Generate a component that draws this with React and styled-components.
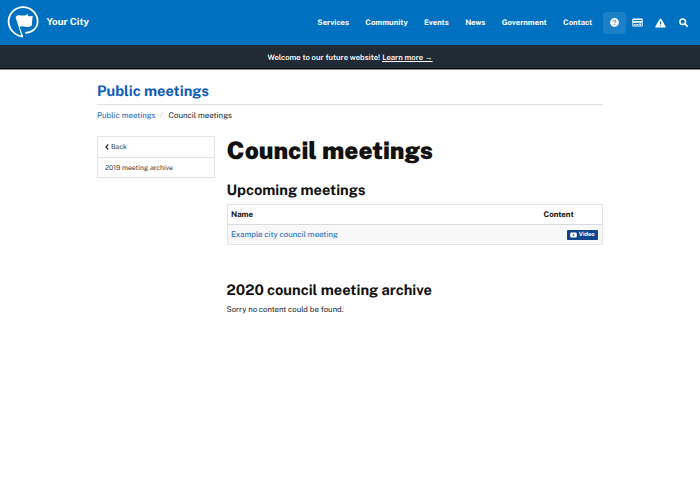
import React from 'react';
import styled, { createGlobalStyle } from 'styled-components';

const Global = createGlobalStyle`
  *, *::before, *::after { box-sizing: border-box; }
  html { background: #fff; }
  body { margin: 0; font-family: "Public Sans", Inter, "Liberation Sans", sans-serif; color: #212529; font-size: 7.75px; line-height: 12px; text-rendering: geometricPrecision; }
  h1, h2, p { margin: 0; }
  a { color: #1467bd; text-decoration: none; }
`;

const Header = styled.header`
  height: 45px;
  padding: 0 5px 0 6px;
  display: flex;
  align-items: center;
  background: #0070c0;
  color: #fff;
`;
const Brand = styled.a`
  display: flex;
  align-items: center;
  gap: 6.5px;
  margin-right: auto;
  color: #fff;
  font-size: 9.8px;
  font-weight: 700;
`;
const BrandName = styled.span`
  padding-top: 1px;
`;
const Logo = styled.svg`
  width: 34px;
  height: 34px;
  display: block;
  margin-top: -1px;
`;
const Nav = styled.nav`
  display: flex;
  align-items: center;
  gap: 16.3px;
  margin-right: 10.7px;
`;
const NavLink = styled.a`
  color: #fff;
  font-size: 7.7px;
  font-weight: 700;
`;
const Tools = styled.div`
  display: flex;
`;
const Tool = styled.a`
  width: 23px;
  height: 22px;
  border-radius: 4px;
  display: flex;
  align-items: center;
  justify-content: center;
  background: ${(p) => (p.$active ? '#1b80c7' : 'transparent')};
  svg { display: block; fill: #fff; }
`;

const Banner = styled.div`
  height: 24px;
  margin-bottom: 1px;
  padding-top: 2px;
  border-bottom: 1px solid #07090b;
  box-shadow: 0 1px 0 #8a8d90;
  display: flex;
  align-items: center;
  justify-content: center;
  gap: 2px;
  background: #212b35;
  color: #fff;
  font-size: 7.7px;
  font-weight: 600;
`;
const BannerLink = styled.a`
  color: #fff;
  text-decoration: underline;
  text-underline-offset: 1px;
`;
const Arrow = styled.span`
  font-family: "Liberation Sans", sans-serif;
`;

const Page = styled.main`
  width: 506px;
  margin: 0 auto;
`;
const SectionTitle = styled.h2`
  height: 35px;
  padding-top: 13px;
  border-bottom: 1px solid #dee2e6;
  color: #0f5cb8;
  font-size: 14.6px;
  line-height: 18px;
  font-weight: 700;
`;
const Breadcrumb = styled.nav`
  display: flex;
  margin-top: 5px;
  font-size: 7.87px;
`;
const Slash = styled.span`
  width: 13px;
  padding-left: 4.5px;
  color: #b3bac1;
`;
const Columns = styled.div`
  display: grid;
  grid-template-columns: 118px 376.5px;
  column-gap: 11.5px;
  margin-top: 14px;
`;
const SideMenu = styled.nav`
  align-self: start;
  border: 1px solid #e3e3e3;
`;
const SideLink = styled.a`
  display: flex;
  align-items: center;
  height: 20px;
  padding-left: 7px;
  color: #343a40;
  font-size: 6.87px;
  & + & { border-top: 1px solid #e3e3e3; }
  svg { width: 4px; height: 6px; margin-right: 2px; }
`;
const PageTitle = styled.h1`
  color: #111;
  font-size: 24.2px;
  line-height: 30px;
  font-weight: 900;
`;
const Heading = styled.h2`
  margin-top: ${(p) => p.$top}px;
  color: #111;
  font-size: 14.6px;
  line-height: 18px;
  font-weight: 700;
`;
const Table = styled.div`
  margin-top: 4px;
  border: 1px solid #e3e5e7;
`;
const Row = styled.div`
  display: grid;
  grid-template-columns: 1fr 62px;
  align-items: center;
  height: ${(p) => (p.$head ? 19 : 20)}px;
  padding: 0 4px 0 3.5px;
  font-size: 7.86px;
  background: ${(p) => (p.$head ? '#fff' : '#f8f8f8')};
  color: #111;
  font-weight: ${(p) => (p.$head ? 700 : 400)};
  & + & { padding-top: 1px; border-top: 1px solid #d9dcdf; }
`;
const Cell = styled.span`
  padding-left: ${(p) => p.$indent || 0}px;
`;
const VideoButton = styled.a`
  justify-self: end;
  display: flex;
  align-items: center;
  justify-content: center;
  gap: 1.5px;
  width: 31px;
  height: 10px;
  border-radius: 1px;
  background: #11468f;
  color: #fff;
  font-size: 5.85px;
  line-height: 8px;
  font-weight: 700;
  svg { width: 7px; height: 6px; }
`;
const Empty = styled.p`
  margin-top: 4px;
  font-size: 7.76px;
`;

const links = ['Services', 'Community', 'Events', 'News', 'Government', 'Contact'];

export default function App() {
  return (
    <>
      <Global />
      <Header>
        <Brand>
          <Logo viewBox="0 0 34 34" fill="none">
            <path d="M17 31.6C8.600 30.6 2.600 24 2.600 16.6a14.5 14.5 0 0 1 29 0C31.6 23 26.3 27.7 19.2 27.9" stroke="#fff" strokeWidth="1.8" />
            <path d="M9.5 12C12 8.700 15 11 18 10.500c1.700-.2 2.800-.8 3.700-1.600l.5 2c1.400.5 3 .5 4.500-.1l-1 10c-3 1.800-5.800 1.200-8 .7-1.700-.4-3-.1-4 .8l3.600 9.300h-1.600L9.500 12Z" fill="#fff" />
          </Logo>
          <BrandName>Your City</BrandName>
        </Brand>
        <Nav>{links.map((l) => <NavLink key={l}>{l}</NavLink>)}</Nav>
        <Tools>
          <Tool $active>
            <svg width="9" height="9" viewBox="0 0 9 9">
              <circle cx="4.5" cy="4.5" r="4.4" />
              <path d="M3.2 3.5c.1-1.7 2.8-1.5 2.7 0 0 .9-1.3.9-1.3 1.8M4.6 6.2v.9" fill="none" stroke="#1b70b8" strokeWidth="1" />
            </svg>
          </Tool>
          <Tool>
            <svg width="11" height="9" viewBox="0 0 11 9">
              <path fillRule="evenodd" d="M1.2.5h8.6q.9 0 .9.9v6.2q0 .9-.9.9H1.2Q.3 8.5.3 7.600V1.400Q.3.5 1.200.5ZM1.200 2v1h8.600V2Zm0 2.700v2.900h8.600V4.700Zm.8 1.200h1.500v1H2Zm2.200 0h2.200v1H4.200ZM7.200 5.500H9V7H7.200Z" />
            </svg>
          </Tool>
          <Tool>
            <svg width="11" height="10" viewBox="0 0 11 10">
              <path d="M5.5.4q.5 0 .8.6l4.300 7.500q.5 1.100-.7 1.100H1.100Q-.1 9.600.4 8.500L4.700 1q.3-.6.8-.6Z" />
              <path d="M5.5 3.4v2.9M5.5 7.2v1.1" stroke="#0070c0" strokeWidth="1.1" />
            </svg>
          </Tool>
          <Tool>
            <svg width="9" height="9" viewBox="0 0 9 9">
              <circle cx="3.7" cy="3.7" r="2.8" fill="none" stroke="#fff" strokeWidth="1.5" />
              <path d="m5.9 5.9 2.3 2.3" stroke="#fff" strokeWidth="1.7" strokeLinecap="round" />
            </svg>
          </Tool>
        </Tools>
      </Header>
      <Banner>
        <span>Welcome to our future website!</span>
        <BannerLink>Learn more <Arrow>→</Arrow></BannerLink>
      </Banner>
      <Page>
        <SectionTitle>Public meetings</SectionTitle>
        <Breadcrumb>
          <a>Public meetings</a>
          <Slash>/</Slash>
          <span>Council meetings</span>
        </Breadcrumb>
        <Columns>
          <SideMenu>
            <SideLink>
              <svg viewBox="0 0 4 6"><path d="M3.3.5.9 3l2.4 2.5" fill="none" stroke="#222" strokeWidth="1.1" /></svg>
              Back
            </SideLink>
            <SideLink>2019 meeting archive</SideLink>
          </SideMenu>
          <div>
            <PageTitle>Council meetings</PageTitle>
            <Heading $top={16}>Upcoming meetings</Heading>
            <Table>
              <Row $head>
                <Cell>Name</Cell>
                <Cell $indent={7.5}>Content</Cell>
              </Row>
              <Row>
                <a>Example city council meeting</a>
                <VideoButton>
                  <svg viewBox="0 0 7 6"><rect x=".2" y=".6" width="6.6" height="4.8" rx="1.2" fill="#fff" /><path d="m2.8 1.9 2 1.1-2 1.1Z" fill="#11468f" /></svg>
                  Video
                </VideoButton>
              </Row>
            </Table>
            <Heading $top={37}>2020 council meeting archive</Heading>
            <Empty>Sorry no content could be found.</Empty>
          </div>
        </Columns>
      </Page>
    </>
  );
}
